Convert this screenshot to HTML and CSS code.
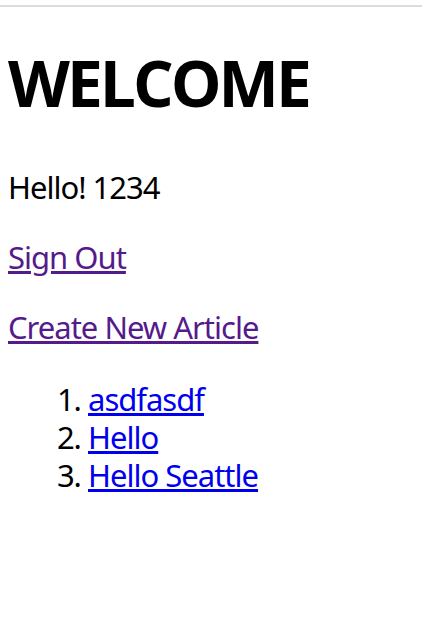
FILE: index.html
```html
<!DOCTYPE html>
<html>
<head>
<meta charset="utf-8">
<link rel="stylesheet" href="styles.css">
</head>
<body>
<div class="topline"></div>
<h1 class="title">WELCOME</h1>
<p class="text">Hello! 1234</p>
<p class="text"><a class="link visited" href="#signout">Sign Out</a></p>
<p class="text"><a class="link visited" href="#new">Create New Article</a></p>
<ol class="articles">
<li><a class="link" href="#a1">asdfasdf</a></li>
<li><a class="link" href="#a2">Hello</a></li>
<li><a class="link" href="#a3">Hello Seattle</a></li>
</ol>
</body>
</html>
```
FILE: styles.css
```css
html, body {
  margin: 0;
  padding: 0;
  background: #fff;
}
body {
  font-family: "Noto Sans", "Open Sans", sans-serif;
  font-size: 31px;
  letter-spacing: -1px;
  line-height: 38px;
  color: #000;
  padding: 0 8px;
}
.topline {
  height: 2px;
  background: #dcdcdf;
  margin: 5px -8px 0;
}
.title {
  font-family: "Open Sans", "Noto Sans", sans-serif;
  font-weight: 700;
  font-size: 64px;
  letter-spacing: -3px;
  line-height: 76px;
  margin: 38px 0 47px;
}
.text {
  margin: 32px 0;
}
.link {
  color: #0000ee;
  text-decoration: underline;
}
.link.visited {
  color: #551a8b;
}
.articles {
  margin: 34px 0 32px;
  padding-left: 80px;
}
```
